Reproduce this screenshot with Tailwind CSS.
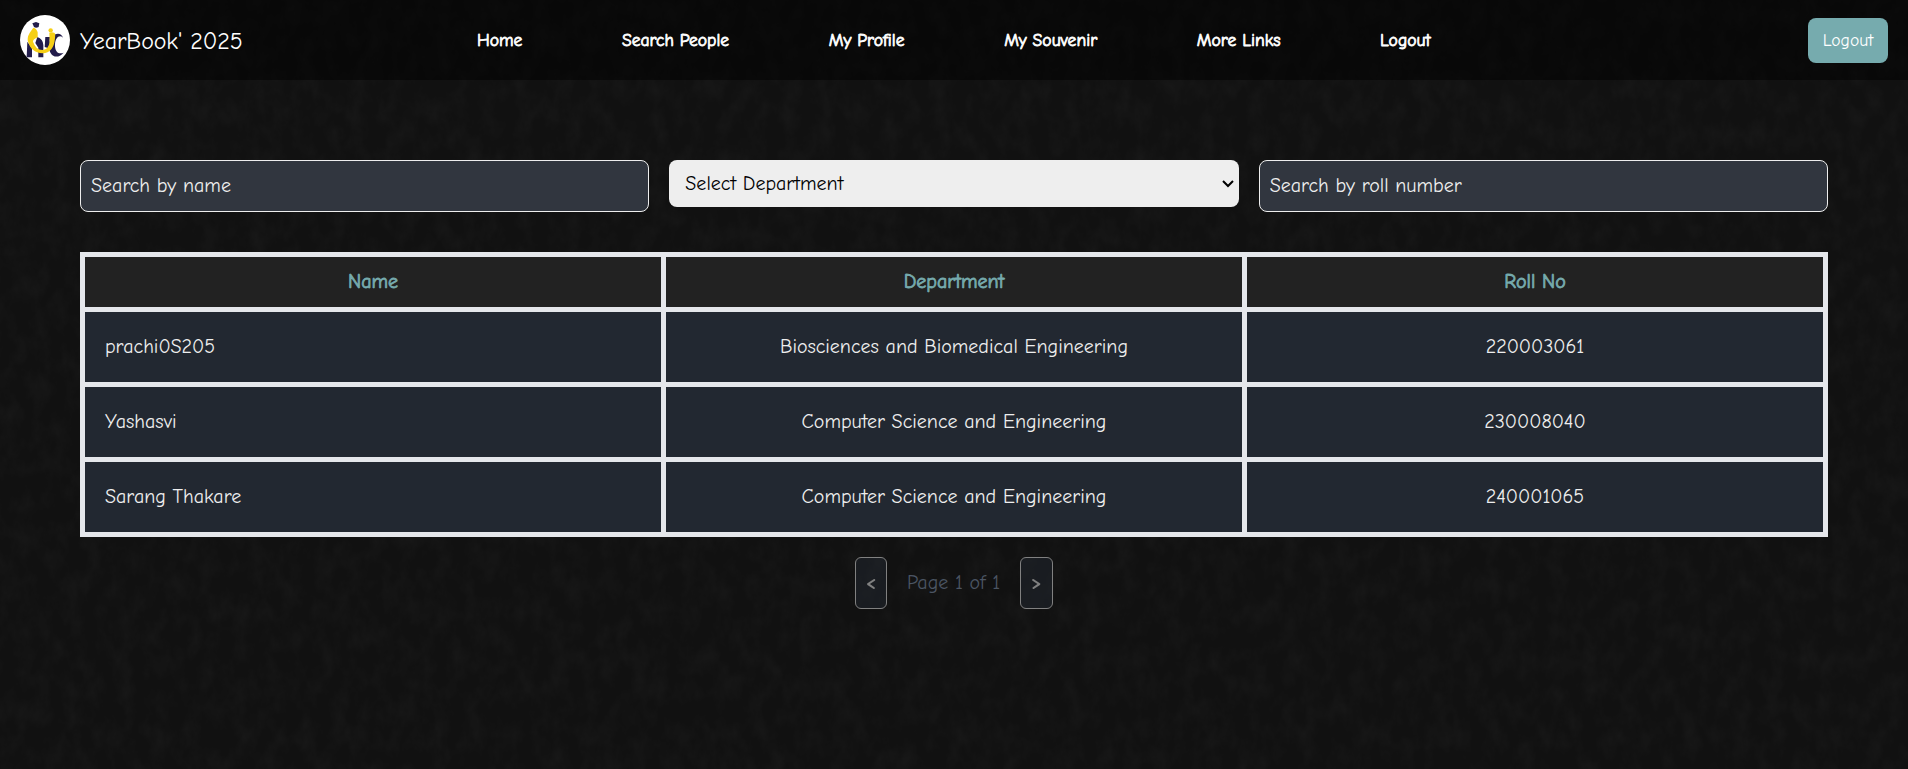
<!DOCTYPE html>
<html lang="en">
<head>
<meta charset="utf-8">
<title>YearBook' 2025</title>
<script src="https://cdn.jsdelivr.net/npm/@tailwindcss/browser@4"></script>
</head>
<body class="relative h-screen overflow-hidden bg-[#111111] font-['Comic_Neue','Lato',sans-serif] text-xl text-[#eeeeee]">
<svg class="absolute inset-0 -z-10 size-full" aria-hidden="true">
  <filter id="grain" x="0" y="0" width="100%" height="100%">
    <feTurbulence type="fractalNoise" baseFrequency="0.06 0.04" numOctaves="4" seed="8"/>
    <feColorMatrix values="0 0 0 0 1  0 0 0 0 1  0 0 0 0 1  0.05 0 0 0 -0.02"/>
  </filter>
  <rect width="100%" height="100%" filter="url(#grain)"/>
</svg>

<nav class="flex h-20 items-center bg-black/50 px-5 text-white">
  <a class="flex w-[457px] shrink-0 items-center gap-2.5">
    <svg class="size-[50px]" viewBox="0 0 150 150">
      <circle cx="75" cy="75" r="75" fill="#fff"/>
      <g fill="#221c4b">
        <path d="M37 25L48 21L58 25L56 36Q48 40 42 36Z"/>
        <path d="M22 80L36 100V127H20Z"/>
        <path d="M52 66Q69 72 70 90V127H55V98L46 84Z"/>
        <path d="M76 66L90 66L86 100L74 96Z"/>
        <path d="M129 68C121 44 88 58 87 90C86 124 110 136 131 113C114 120 104 109 105 88C106 68 118 58 129 68Z"/>
      </g>
      <circle cx="92" cy="46" r="6.5" fill="#f6cf16"/>
      <path d="M40 38Q50 40 53 52L53 67Q39 72 39 80Q48 106 68 105Q86 103 89 80L88 53Q97 50 104 54Q107 58 105 70Q101 114 68 115Q32 114 23 76Q22 62 33 48Z" fill="#f6cf16"/>
    </svg>
    <span class="whitespace-nowrap pt-0.5 text-2xl tracking-[-0.1px]">YearBook' 2025</span>
  </a>
  <div class="flex items-center gap-[99.6px] whitespace-nowrap text-[17.6px] [-webkit-text-stroke:0.8px_white]">
    <a>Home</a>
    <a>Search People</a>
    <a>My Profile</a>
    <a>My Souvenir</a>
    <a>More Links</a>
    <a>Logout</a>
  </div>
  <button class="ml-auto h-[45px] w-20 rounded-lg bg-[#76abae] pt-px text-[17.6px] leading-none">Logout</button>
</nav>

<main class="px-20 pt-20">
  <div class="grid grid-cols-3 items-start gap-5">
    <input class="h-[52px] w-full rounded-lg border border-[#eeeeee] bg-[#31363f] px-2.5 pb-0.5 placeholder:text-[#eeeeee]" placeholder="Search by name">
    <div class="relative">
      <select class="block h-[47px] w-full appearance-none rounded-lg bg-[#eeeeee] px-4 text-black"><option>Select Department</option></select>
      <svg class="pointer-events-none absolute right-[5px] top-[19px] h-2.5 w-3" viewBox="0 0 12 10" fill="none" stroke="#000" stroke-width="2"><path d="M1 2L6 7L11 2"/></svg>
    </div>
    <input class="h-[52px] w-full rounded-lg border border-[#eeeeee] bg-[#31363f] px-2.5 pb-0.5 placeholder:text-[#eeeeee]" placeholder="Search by roll number">
  </div>

  <div class="mt-10 grid grid-cols-3 grid-rows-[50px_70px_70px_70px] gap-[5px] bg-[#e5e7eb] p-[5px] text-center *:flex *:items-center *:bg-[#222831]">
    <div class="justify-center !bg-[#222222] [-webkit-text-stroke:0.8px_#76abae] text-[#76abae]">Name</div>
    <div class="justify-center !bg-[#222222] [-webkit-text-stroke:0.8px_#76abae] text-[#76abae]">Department</div>
    <div class="justify-center !bg-[#222222] [-webkit-text-stroke:0.8px_#76abae] text-[#76abae]">Roll No</div>
    <div class="px-5">prachi0S205</div>
    <div class="justify-center">Biosciences and Biomedical Engineering</div>
    <div class="justify-center">220003061</div>
    <div class="px-5">Yashasvi</div>
    <div class="justify-center">Computer Science and Engineering</div>
    <div class="justify-center">230008040</div>
    <div class="px-5">Sarang Thakare</div>
    <div class="justify-center">Computer Science and Engineering</div>
    <div class="justify-center">240001065</div>
  </div>

  <div class="mt-5 flex items-center justify-center">
    <button class="h-[52px] w-8 rounded-md border border-[#eeeeee] bg-[#222831] font-bold opacity-50" disabled>&lt;</button>
    <span class="ml-5 w-[93px] whitespace-nowrap text-[#4b5563]">Page 1 of 1</span>
    <button class="ml-5 h-[52px] w-[33px] rounded-md border border-[#eeeeee] bg-[#222831] font-bold opacity-50" disabled>&gt;</button>
  </div>
</main>
</body>
</html>
